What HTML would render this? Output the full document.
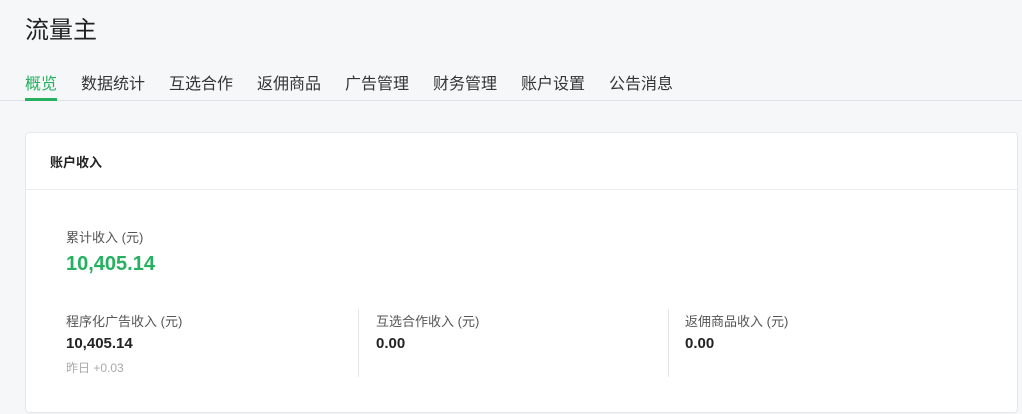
<!DOCTYPE html>
<html><head><meta charset="utf-8"><style>
body{margin:0;width:1022px;height:414px;background:#f6f7f9;font-family:"Liberation Sans","Noto Sans CJK SC",sans-serif;position:relative;overflow:hidden;color:#333}
.a{position:absolute;white-space:nowrap}
.t{font-size:16px;color:#353535;top:70px}
.card{position:absolute;left:25px;top:132px;width:991px;height:279px;background:#fff;border:1px solid #e6e7ea;border-radius:4px}
.div{position:absolute;width:1px;background:#e5e5e5;top:309px;height:68px}
.lb{font-size:13px;color:#555;top:311px}
.v{font-size:15px;font-weight:bold;color:#222;top:335px}
</style></head><body>
<div class="a" style="left:25px;top:10px;font-size:24px;color:#222">流量主</div>
<div class="a t" style="left:25px;color:#25b15f">概览</div>
<div class="a t" style="left:81px">数据统计</div>
<div class="a t" style="left:169px">互选合作</div>
<div class="a t" style="left:257px">返佣商品</div>
<div class="a t" style="left:345px">广告管理</div>
<div class="a t" style="left:433px">财务管理</div>
<div class="a t" style="left:521px">账户设置</div>
<div class="a t" style="left:609px">公告消息</div>
<div class="a" style="left:0;top:100px;width:1022px;height:1px;background:#e0e1e4"></div>
<div class="a" style="left:25px;top:98px;width:32px;height:3px;background:#25b15f"></div>
<div class="card"></div>
<div class="a" style="left:26px;top:189px;width:991px;height:1px;background:#eceded"></div>
<div class="a" style="left:50px;top:152px;font-size:13px;font-weight:bold;color:#222">账户收入</div>
<div class="a" style="left:66px;top:227px;font-size:13px;color:#555">累计收入 (元)</div>
<div class="a" style="left:66px;top:253px;font-size:20px;font-weight:bold;color:#25b15f">10,405.14</div>
<div class="a lb" style="left:66px">程序化广告收入 (元)</div>
<div class="a v" style="left:66px">10,405.14</div>
<div class="a" style="left:66px;top:359px;font-size:12px;color:#aaa">昨日 +0.03</div>
<div class="div" style="left:358px"></div>
<div class="a lb" style="left:376px">互选合作收入 (元)</div>
<div class="a v" style="left:376px">0.00</div>
<div class="div" style="left:668px"></div>
<div class="a lb" style="left:685px">返佣商品收入 (元)</div>
<div class="a v" style="left:685px">0.00</div>
</body></html>
